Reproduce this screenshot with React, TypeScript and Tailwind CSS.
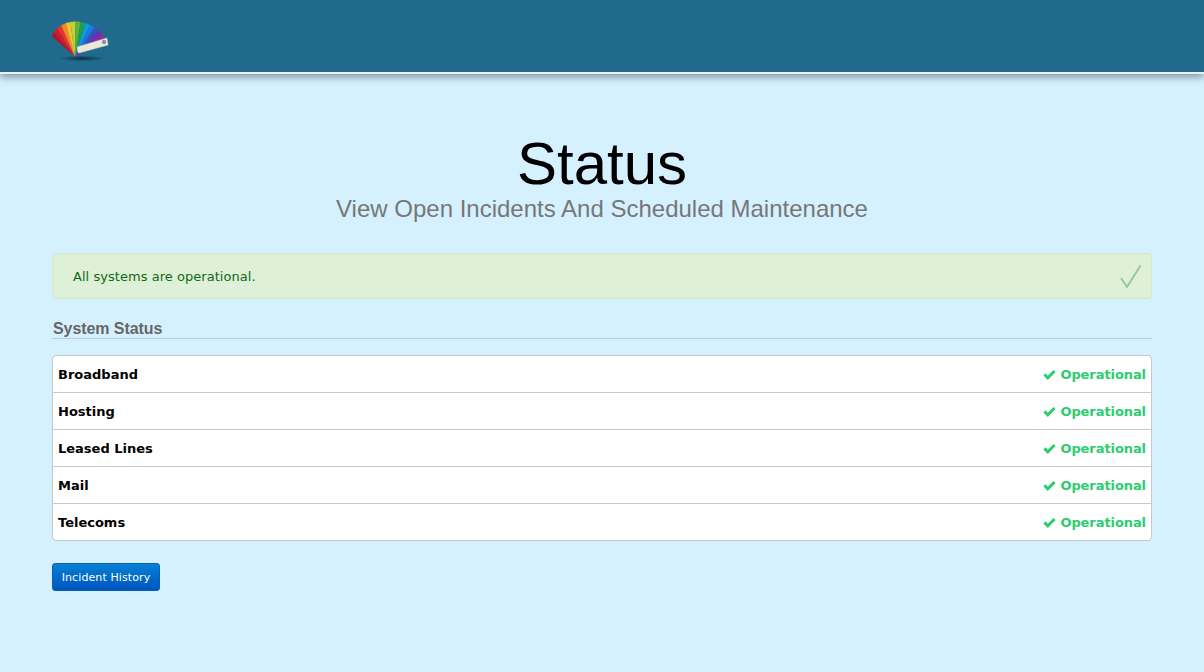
const colors = ["#b81228","#d01c2c","#e8322a","#f08a24","#f4c22c","#c4d034","#5cb43a","#1f9e4a","#0f9ae0","#1c7ad8","#3a50c0","#6a30b0","#8e2a9e"];

function Logo() {
  const cx = 26, cy = 39;
  const start = -138, end = -32;
  const pt = (t: number) => {
    const deg = start + t * (end - start);
    const a = (deg * Math.PI) / 180;
    const rad = t < 0.5 ? 30 + 5.5 * Math.sqrt(Math.sin(t * Math.PI)) : 35.5;
    return `${(cx + rad * Math.cos(a)).toFixed(2)} ${(cy + rad * Math.sin(a)).toFixed(2)}`;
  };
  const n = colors.length;
  return (
    <svg width="62" height="44" viewBox="0 0 62 44" className="block">
      <defs>
        <radialGradient id="sh">
          <stop offset="0%" stopColor="#0b2c3c" stopOpacity="0.95" />
          <stop offset="100%" stopColor="#0b2c3c" stopOpacity="0" />
        </radialGradient>
      </defs>
      <ellipse cx="33" cy="40.5" rx="23" ry="3" fill="url(#sh)" />
      {colors.map((c, i) => (
        <path
          key={c}
          d={`M${cx} ${cy} L${pt(i / n)} L${pt((i + 0.25) / n)} L${pt((i + 0.5) / n)} L${pt((i + 0.75) / n)} L${pt((i + 1) / n)} Z`}
          fill={c}
        />
      ))}
      <path d="M28 29 L58 20 L59 27 L30 35 Q29 35 28.6 33 Z" fill="#ece8d8" stroke="#d8d2c0" strokeWidth="0.5" />
      <circle cx="55" cy="24" r="2" fill="#5a7ac8" />
      <circle cx="55" cy="24" r="0.9" fill="#d8a040" />
    </svg>
  );
}

function Check() {
  return (
    <svg width="13" height="11" viewBox="0 0 13 11" className="block -translate-y-[1px] translate-x-[1px]">
      <path d="M1.4 5.4 L4.8 8.8 L11.6 2" fill="none" stroke="#2ecc71" strokeWidth="3" />
    </svg>
  );
}

const rows = ["Broadband", "Hosting", "Leased Lines", "Mail", "Telecoms"];

export default function App() {
  const verdana = "font-['DejaVu_Sans',Verdana,sans-serif]";
  return (
    <div className="min-h-[672px] bg-[#d5f1ff] font-['Liberation_Sans',Arial,sans-serif]">
      <header className="h-[74px] bg-[#206a8e] border-b-2 border-[#e8eef2] shadow-[0_3px_8px_rgba(0,0,0,0.4)] pl-[49px] pt-[18px]">
        <Logo />
      </header>

      <main className="px-[52px] pt-[56px]">
        <h1 className="text-center text-[60px] leading-[67px] text-black">Status</h1>
        <p className="-mt-[2px] text-center text-[24px] leading-[27px] text-[#777777]">View Open Incidents And Scheduled Maintenance</p>

        <div className={`mt-[31px] h-[46px] w-[1100px] flex items-center justify-between rounded-[4px] border border-[#d6e9c6] bg-[#dff0d8] pl-5 pr-[9px] pt-[2px] text-[13px] tracking-[0.04px] text-[#116a11] ${verdana}`}>
          <span>All systems are operational.</span>
          <svg width="22" height="26" viewBox="0 0 22 26" className="block">
            <path d="M1 14 L7 23 L20.5 1.5" fill="none" stroke="#9ac79a" strokeWidth="2" />
          </svg>
        </div>

        <h2 className="mt-[21px] h-[19px] w-[1100px] border-b border-[#c4cbd6] pl-px text-[16px] leading-[18px] font-bold tracking-[-0.08px] text-[#666666]">System Status</h2>

        <div className={`mt-[16px] w-[1100px] overflow-hidden rounded-[4px] border border-[#c8c8c8] bg-white text-[13px] ${verdana}`}>
          {rows.map((r, i) => (
            <div key={r} className={i > 0 ? "flex h-[37px] items-center justify-between border-t border-[#c8c8c8] pl-[5px] pr-[5px] pt-[2px] font-bold" : "flex h-[36px] items-center justify-between pl-[5px] pr-[5px] pt-[2px] font-bold"}>
              <span className="text-black">{r}</span>
              <span className="flex items-center gap-[5px] tracking-[-0.08px] text-[#2ecc71]">
                <Check />
                Operational
              </span>
            </div>
          ))}
        </div>

        <button className={`mt-[22px] block h-[28px] w-[108px] rounded-[3px] border border-[#0860b0] bg-gradient-to-b from-[#0a80d4] to-[#0055c0] pt-[2px] text-[11px] tracking-[0.1px] text-white ${verdana}`}>
          Incident History
        </button>
      </main>
    </div>
  );
}
